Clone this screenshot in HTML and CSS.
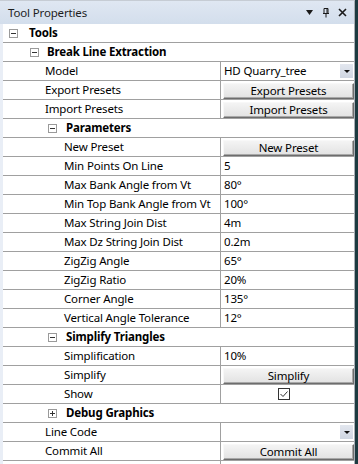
FILE: index.html
```html
<!DOCTYPE html>
<html>
<head>
    <title>Tool Properties</title>
    <link rel="stylesheet" href="styles.css">
</head>
<body>
    <div class="panel">
        <div class="title-bar">
            <span class="title">Tool Properties</span>
            <div class="title-icons">
                <svg width="8" height="6" viewBox="0 0 8 6"><path d="M0 0H7L3.5 5Z" fill="#1a1a1a"/></svg>
                <svg width="8" height="10" viewBox="0 0 8 10"><path d="M2 0.5H6V5.5H2Z M1 5.5H7 M4 5.5V9.5 M5 0.5V5.5" fill="none" stroke="#1a1a1a" stroke-width="1"/></svg>
                <svg width="9" height="9" viewBox="0 0 9 9"><path d="M1 1L8 8M8 1L1 8" stroke="#1a1a1a" stroke-width="1.6"/></svg>
            </div>
        </div>

        <div class="grid">
            <div class="row cat d0"><span class="box minus"></span><span class="cat-name">Tools</span></div>
            <div class="row cat d1"><span class="box minus"></span><span class="cat-name">Break Line Extraction</span></div>

            <div class="row prop d1">
                <div class="label">Model</div>
                <div class="value combo">HD Quarry_tree<span class="drop"></span></div>
            </div>
            <div class="row prop d1">
                <div class="label">Export Presets</div>
                <div class="value"><button class="btn">Export Presets</button></div>
            </div>
            <div class="row prop d1">
                <div class="label">Import Presets</div>
                <div class="value"><button class="btn">Import Presets</button></div>
            </div>

            <div class="row cat d2"><span class="box minus"></span><span class="cat-name">Parameters</span></div>
            <div class="row prop d2">
                <div class="label">New Preset</div>
                <div class="value"><button class="btn">New Preset</button></div>
            </div>
            <div class="row prop d2"><div class="label">Min Points On Line</div><div class="value">5</div></div>
            <div class="row prop d2"><div class="label">Max Bank Angle from Vt</div><div class="value">80°</div></div>
            <div class="row prop d2"><div class="label">Min Top Bank Angle from Vt</div><div class="value">100°</div></div>
            <div class="row prop d2"><div class="label">Max String Join Dist</div><div class="value">4m</div></div>
            <div class="row prop d2"><div class="label">Max Dz String Join Dist</div><div class="value">0.2m</div></div>
            <div class="row prop d2"><div class="label">ZigZig Angle</div><div class="value">65°</div></div>
            <div class="row prop d2"><div class="label">ZigZig Ratio</div><div class="value">20%</div></div>
            <div class="row prop d2"><div class="label">Corner Angle</div><div class="value">135°</div></div>
            <div class="row prop d2"><div class="label">Vertical Angle Tolerance</div><div class="value">12°</div></div>

            <div class="row cat d2"><span class="box minus"></span><span class="cat-name">Simplify Triangles</span></div>
            <div class="row prop d2"><div class="label">Simplification</div><div class="value">10%</div></div>
            <div class="row prop d2">
                <div class="label">Simplify</div>
                <div class="value"><button class="btn">Simplify</button></div>
            </div>
            <div class="row prop d2">
                <div class="label">Show</div>
                <div class="value center">
                    <svg class="check" width="12" height="12" viewBox="0 0 12 12"><rect x="0.5" y="0.5" width="11" height="11" fill="#fff" stroke="#333"/><path d="M2.5 6L5 8.5L9.5 3.5" fill="none" stroke="#333" stroke-width="1"/></svg>
                </div>
            </div>

            <div class="row cat d2"><span class="box plus"></span><span class="cat-name">Debug Graphics</span></div>

            <div class="row prop d1">
                <div class="label">Line Code</div>
                <div class="value combo"><span class="drop"></span></div>
            </div>
            <div class="row prop d1">
                <div class="label">Commit All</div>
                <div class="value"><button class="btn">Commit All</button></div>
            </div>
            <div class="row prop d1 tail">
                <div class="label"></div>
                <div class="value"></div>
            </div>
        </div>
    </div>
</body>
</html>
```

FILE: styles.css
```css
body {
    margin: 0;
    background: #1d3a40;
    font-family: 'Noto Sans', 'Open Sans', sans-serif;
    font-size: 11.5px;
    letter-spacing: -0.15px;
    color: #000;
}

.panel {
    width: 355px;
    height: 464px;
    overflow: hidden;
    background: #fff;
    border-top: 1px solid #c6ccd4;
    border-right: 1px solid #a9aeb5;
    box-sizing: border-box;
}

.title-bar {
    height: 23px;
    display: flex;
    align-items: center;
    justify-content: space-between;
    padding: 0 7px 0 8px;
    background: linear-gradient(#dfe7f2, #d3deec);
    color: #1e1e1e;
}

.title-icons {
    display: flex;
    align-items: center;
    gap: 8px;
}

.grid {
    display: flex;
    flex-direction: column;
    border-left: 3px solid #e9eef6;
}

.row {
    height: 18px;
    display: flex;
    align-items: center;
    border-bottom: 1px solid #a0a0a0;
    line-height: 18px;
    white-space: nowrap;
}

/* category rows */
.cat {
    font-weight: bold;
}

.cat.d0 { padding-left: 6px; }
.cat.d1 { padding-left: 27px; }
.cat.d2 { padding-left: 45px; }

.cat.d0 .cat-name { margin-left: 11px; }
.cat.d1 .cat-name { margin-left: 8px; }
.cat.d2 .cat-name { margin-left: 9px; }

.box {
    width: 7px;
    height: 7px;
    border: 1px solid #9a9a9a;
    position: relative;
    flex: none;
}

.box::before {
    content: '';
    position: absolute;
    left: 1px;
    top: 3px;
    width: 5px;
    height: 1px;
    background: #333;
}

.box.plus::after {
    content: '';
    position: absolute;
    left: 3px;
    top: 1px;
    width: 1px;
    height: 5px;
    background: #333;
}

/* property rows */
.prop .label {
    width: 218px;
    box-sizing: border-box;
    height: 18px;
    overflow: hidden;
    border-right: 1px solid #a0a0a0;
    flex: none;
}

.prop.d1 .label { padding-left: 42px; }
.prop.d2 .label { padding-left: 61px; }

.value {
    flex: 1;
    height: 18px;
    padding-left: 3px;
    display: flex;
    align-items: center;
    position: relative;
}

.value.center {
    justify-content: center;
    padding: 0 8px 0 0;
}

.combo .drop {
    position: absolute;
    right: 1px;
    top: 2px;
    width: 13px;
    height: 14px;
    background: linear-gradient(#e3e7ef, #cfd6e2);
}

.combo .drop::after {
    content: '';
    position: absolute;
    left: 4px;
    top: 6px;
    border-left: 3px solid transparent;
    border-right: 3px solid transparent;
    border-top: 3px solid #111;
}

.btn {
    width: 131px;
    height: 16px;
    margin: 1px 0 0 -1px;
    padding: 0;
    font-family: inherit;
    font-size: 11.5px;
    letter-spacing: -0.15px;
    line-height: 14px;
    color: #000;
    background: linear-gradient(#f4f4f4, #e2e2e2);
    border: 1px solid;
    border-color: #f8f8f8 #6d6d6d #6d6d6d #f8f8f8;
    box-shadow: inset -1px -1px 0 #a8a8a8;
}

.check {
    display: block;
}

.tail {
    border-bottom: none;
}
```
